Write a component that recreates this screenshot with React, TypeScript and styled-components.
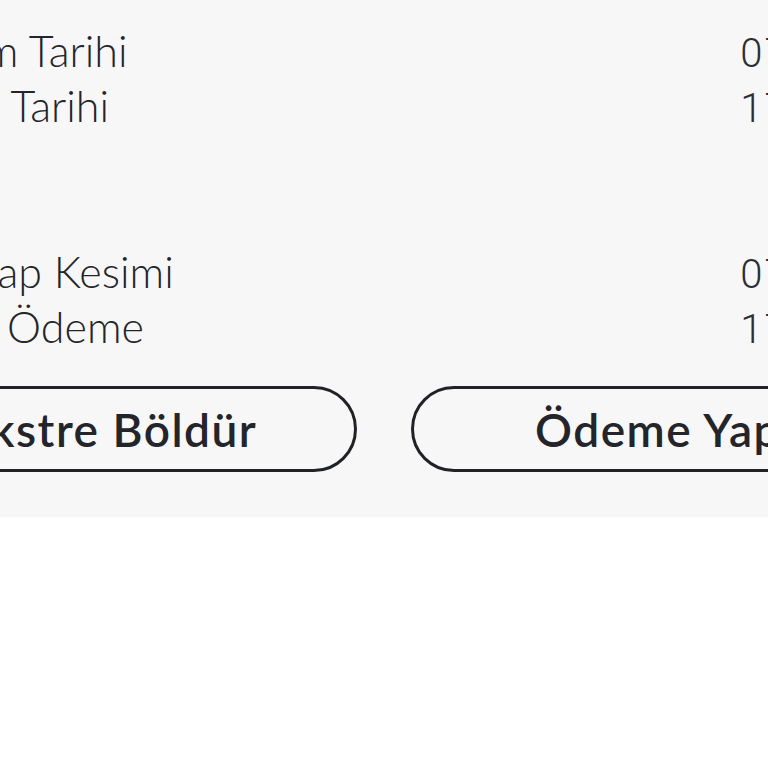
import React from "react";
import styled, { createGlobalStyle } from "styled-components";

const GlobalStyle = createGlobalStyle`
  html, body {
    margin: 0;
    padding: 0;
    background: #ffffff;
    overflow: hidden;
  }
`;

const Stage = styled.div`
  width: 768px;
  height: 768px;
  display: flex;
  justify-content: center;
  align-items: flex-start;
  overflow: hidden;
  background: #ffffff;
`;

const Panel = styled.section`
  flex: 0 0 auto;
  width: 1042px;
  background: #f7f7f7;
  padding: 25px 0 45px;
  display: flex;
  flex-direction: column;
`;

const Group = styled.div<{ $gap: number; $indent: number }>`
  display: flex;
  flex-direction: column;
  padding-left: ${(p) => p.$indent}px;
  margin-bottom: ${(p) => p.$gap}px;
`;

const Row = styled.div`
  display: flex;
  justify-content: space-between;
  align-items: baseline;
  height: 55px;
  margin-right: -52px;
`;

const Label = styled.span`
  font-family: Lato, "Liberation Sans", sans-serif;
  font-weight: 300;
  font-size: 43px;
  color: #23252a;
`;

const Value = styled.span`
  font-family: Roboto, "Liberation Sans", sans-serif;
  font-weight: 300;
  font-size: 40px;
  letter-spacing: 2px;
  color: #2c2e32;
`;

const Actions = styled.div`
  display: flex;
  gap: 54px;
`;

const Button = styled.button`
  flex: 1;
  height: 86px;
  border: 3px solid #202226;
  border-radius: 43px;
  background: transparent;
  font-family: Lato, "Liberation Sans", sans-serif;
  font-weight: 600;
  font-size: 46px;
  letter-spacing: 1.5px;
  color: #23252a;
  cursor: pointer;
`;

type Item = { label: string; value: string };

const first: Item[] = [
  { label: "Kesim Tarihi", value: "07.11.2024" },
  { label: "Vade Tarihi", value: "17.11.2024" },
];

const second: Item[] = [
  { label: "Hesap Kesimi", value: "07.12.2024" },
  { label: "Son Ödeme", value: "17.12.2024" },
];

export default function App() {
  return (
    <>
      <GlobalStyle />
      <Stage>
        <Panel>
          <Group $gap={111} $indent={45}>
            {first.map((r) => (
              <Row key={r.label}>
                <Label>{r.label}</Label>
                <Value>{r.value}</Value>
              </Row>
            ))}
          </Group>
          <Group $gap={30} $indent={62}>
            {second.map((r) => (
              <Row key={r.label}>
                <Label>{r.label}</Label>
                <Value>{r.value}</Value>
              </Row>
            ))}
          </Group>
          <Actions>
            <Button>Ekstre Böldür</Button>
            <Button>Ödeme Yap</Button>
          </Actions>
        </Panel>
      </Stage>
    </>
  );
}
